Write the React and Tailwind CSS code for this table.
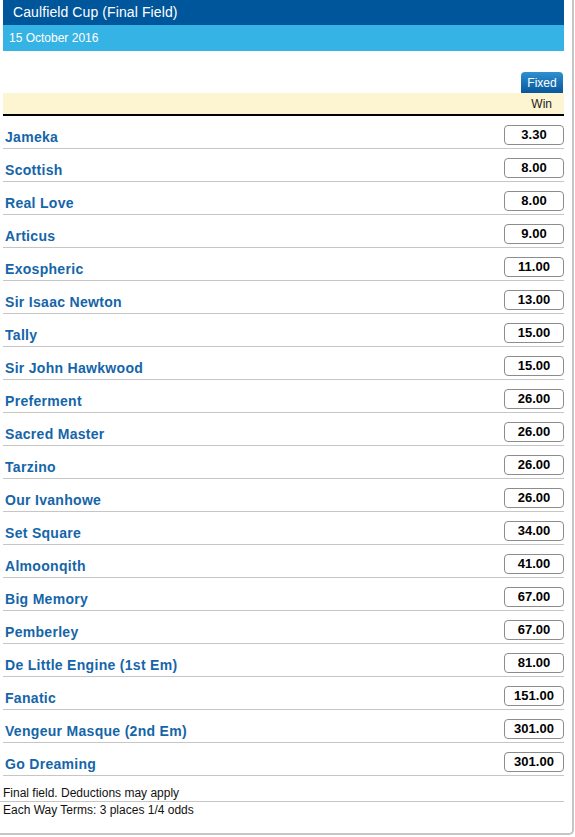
import React from "react";

// Caulfield Cup final field — fixed win odds list
const RUNNERS = [
  ["Jameka", "3.30"],
  ["Scottish", "8.00"],
  ["Real Love", "8.00"],
  ["Articus", "9.00"],
  ["Exospheric", "11.00"],
  ["Sir Isaac Newton", "13.00"],
  ["Tally", "15.00"],
  ["Sir John Hawkwood", "15.00"],
  ["Preferment", "26.00"],
  ["Sacred Master", "26.00"],
  ["Tarzino", "26.00"],
  ["Our Ivanhowe", "26.00"],
  ["Set Square", "34.00"],
  ["Almoonqith", "41.00"],
  ["Big Memory", "67.00"],
  ["Pemberley", "67.00"],
  ["De Little Engine (1st Em)", "81.00"],
  ["Fanatic", "151.00"],
  ["Vengeur Masque (2nd Em)", "301.00"],
  ["Go Dreaming", "301.00"],
];

function RunnerRow({ name, odds }) {
  return (
    <div className="flex items-start justify-between h-[33px] border-b border-[#c6c6c6]">
      <span className="mt-[13px] pl-[2px] text-[14px] leading-[16px] tracking-[0.3px] font-bold text-[#1565a9]">
        {name}
      </span>
      <span className="mt-[9px] w-[60px] h-[20px] flex items-center justify-center rounded-[4px] border border-[#8c8c8c] bg-white text-[13px] font-bold text-black">
        {odds}
      </span>
    </div>
  );
}

export default function App() {
  return (
    <div className="w-[574px] bg-white border-r-2 border-b-2 border-[#c6c6c6] rounded-br-[5px] font-['Liberation_Sans',Arial,sans-serif]">
      <div className="pl-[3px] pr-[8px]">
        {/* Header */}
        <div className="h-[25px] bg-[#00569b] flex items-center pl-[10px] text-[14px] tracking-[0.1px] text-white">
          Caulfield Cup (Final Field)
        </div>
        <div className="h-[26px] bg-[#36b3e5] flex items-center pl-[6px] text-[12px] text-white">
          15 October 2016
        </div>

        {/* Column header */}
        <div className="flex justify-end mt-[21px]">
          <div className="w-[42px] h-[21px] mr-[1px] rounded-t-[4px] bg-gradient-to-b from-[#2e90d2] to-[#06579b] text-white text-[12px] flex items-center justify-center">
            Fixed
          </div>
        </div>
        <div className="h-[23px] bg-[#fdf5d2] border-b-2 border-black flex items-center justify-end pr-[12px] text-[12px] text-[#222]">
          Win
        </div>

        {/* Runners */}
        {RUNNERS.map(([name, odds]) => (
          <RunnerRow key={name} name={name} odds={odds} />
        ))}
      </div>

      {/* Footer notes */}
      <div className="text-[12px] leading-[14px] text-[#111]">
        <div className="pt-[10px] pb-[1px] pl-[3px] border-b border-[#c6c6c6] mr-[8px]">
          Final field. Deductions may apply
        </div>
        <div className="pt-[1px] pl-[3px] pb-[16px]">Each Way Terms: 3 places 1/4 odds</div>
      </div>
    </div>
  );
}
